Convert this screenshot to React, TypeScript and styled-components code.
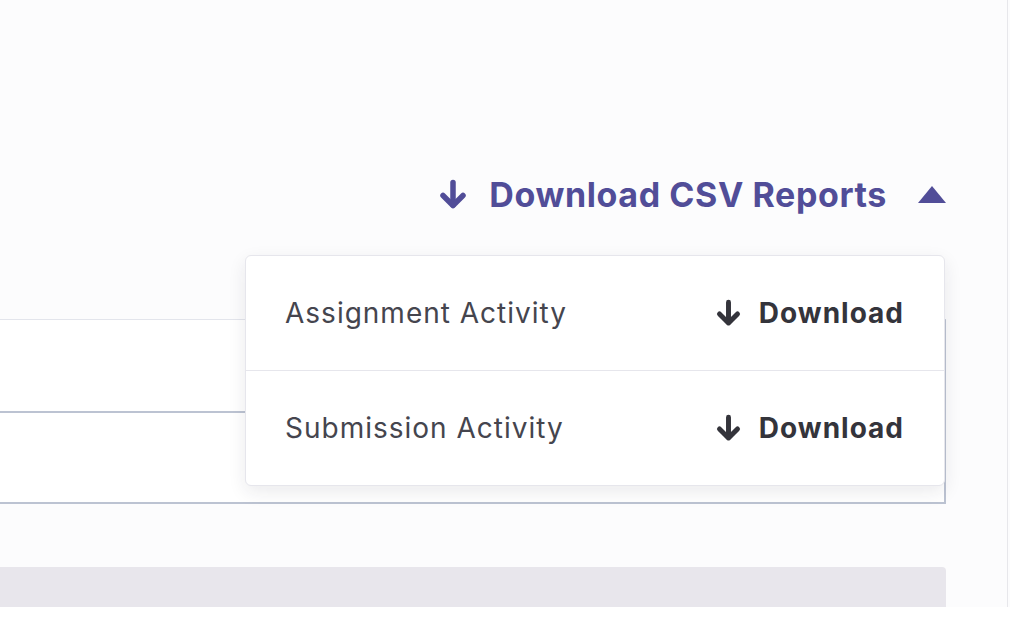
import React from 'react'
import styled, { createGlobalStyle } from 'styled-components'

const GlobalStyle = createGlobalStyle`
  html, body {
    margin: 0;
    padding: 0;
    background: #ffffff;
    font-family: Inter, "Liberation Sans", sans-serif;
  }
`;

const Page = styled.div`
  width: 1010px;
  height: 632px;
  overflow: hidden;
  background: #ffffff;
`;

const Viewport = styled.div`
  height: 607px;
  display: flex;
  overflow: hidden;
  background: #fcfcfd;
`;

const Main = styled.main`
  width: 946px;
  padding-right: 61px;
  border-right: 1px solid #e7e7eb;
  display: flex;
  flex-direction: column;
`;

const HeaderRow = styled.div`
  margin-top: 170px;
  height: 50px;
  display: flex;
  align-items: center;
  justify-content: flex-end;
`;

const CsvToggle = styled.button`
  display: flex;
  align-items: center;
  gap: 21px;
  padding: 0;
  border: none;
  background: none;
  cursor: pointer;
  color: #514d98;
  font-family: Inter, "Liberation Sans", sans-serif;
  font-size: 34px;
  font-weight: 700;
  letter-spacing: 0.6px;
`;

const Caret = styled.span`
  width: 0;
  height: 0;
  margin-left: 10px;
  border-left: 14px solid transparent;
  border-right: 14px solid transparent;
  border-bottom: 17px solid #514d98;
`;

const Content = styled.div`
  position: relative;
  margin-top: 36px;
`;

const Table = styled.div`
  margin-top: 64px;
  border-top: 1px solid #e3e5ec;
  border-right: 2px solid #bcc3d2;
  background: #ffffff;
`;

const TableRow = styled.div<{ $height: number }>`
  height: ${p => p.$height}px;
  border-bottom: 2px solid #bcc3d2;
`;

const Dropdown = styled.div`
  position: absolute;
  top: 0;
  right: 1px;
  width: 698px;
  background: #ffffff;
  border: 1px solid #e6e6ec;
  border-radius: 6px;
  box-shadow: 0 6px 18px rgba(30, 30, 60, 0.09);
`;

const DropItem = styled.div<{ $last?: boolean }>`
  height: 114px;
  display: flex;
  align-items: center;
  justify-content: space-between;
  padding: 0 40px 0 39px;
  border-bottom: ${p => (p.$last ? 'none' : '1px solid #e6e6ec')};
`;

const ItemLabel = styled.span`
  color: #45454e;
  font-size: 28px;
  font-weight: 400;
  letter-spacing: 1px;
`;

const DownloadLink = styled.a`
  display: flex;
  align-items: center;
  gap: 17px;
  color: #34343b;
  font-size: 28px;
  font-weight: 700;
  letter-spacing: 1px;
  text-decoration: none;
  cursor: pointer;
`;

const GrayBar = styled.div`
  margin-top: 63px;
  height: 40px;
  background: #e8e6ec;
  border-top-right-radius: 4px;
`;

const ArrowDown = ({ size, color }: { size: number; color: string }) => (
  <svg width={size} height={size + 1} viewBox="0 0 30 31" fill="none">
    <path d="M15 3.5 V26" stroke={color} strokeWidth="5.5" strokeLinecap="round" />
    <path d="M5 16.5 L15 26.5 L25 16.5" stroke={color} strokeWidth="5.5" strokeLinecap="round" strokeLinejoin="round" />
  </svg>
);

const reports = ['Assignment Activity', 'Submission Activity'];

const App = () => {
  return (
    <Page>
      <GlobalStyle />
      <Viewport>
        <Main>
          <HeaderRow>
            <CsvToggle>
              <ArrowDown size={30} color="#514d98" />
              Download CSV Reports
              <Caret />
            </CsvToggle>
          </HeaderRow>

          <Content>
            <Table>
              <TableRow $height={91} />
              <TableRow $height={89} />
            </Table>

            <Dropdown>
              {reports.map((name, i) => (
                <DropItem key={name} $last={i === reports.length - 1}>
                  <ItemLabel>{name}</ItemLabel>
                  <DownloadLink>
                    <ArrowDown size={27} color="#34343b" />
                    Download
                  </DownloadLink>
                </DropItem>
              ))}
            </Dropdown>
          </Content>

          <GrayBar />
        </Main>
      </Viewport>
    </Page>
  )
}

export default App
